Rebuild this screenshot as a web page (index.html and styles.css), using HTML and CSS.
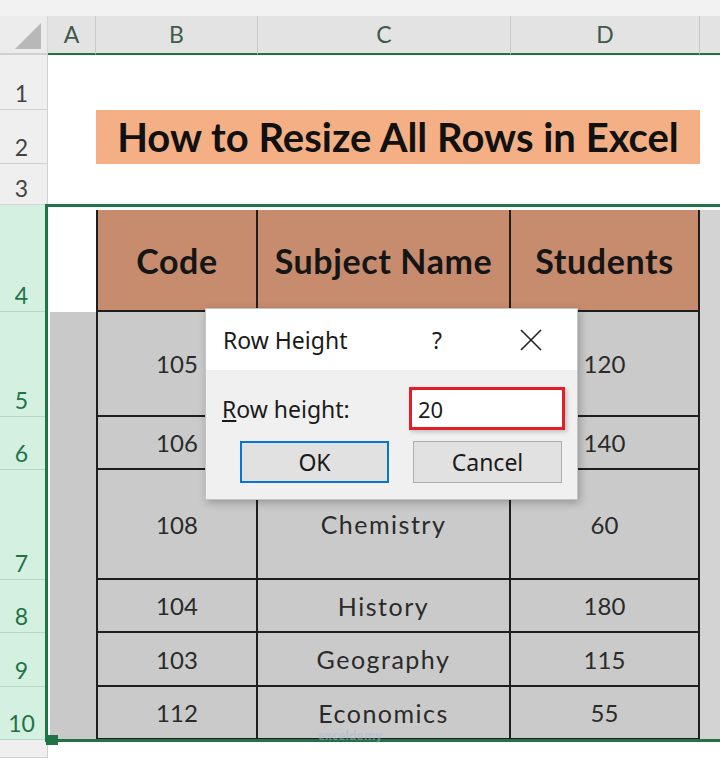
FILE: index.html
```html
<!DOCTYPE html>
<html>
<head>
<meta charset="utf-8">
<link rel="stylesheet" href="styles.css">
</head>
<body>
<div class="sheet">
  <div class="strip"></div>

  <div class="corner"><svg class="tri" width="26" height="26" viewBox="0 0 26 26"><polygon points="26,0 26,26 0,26" fill="#b8b8b8"/></svg></div>
  <div class="ch">A</div>
  <div class="ch">B</div>
  <div class="ch">C</div>
  <div class="ch">D</div>
  <div class="ch last"></div>

  <div class="rh">1</div><div class="c"></div><div class="c"></div><div class="c"></div><div class="c"></div><div class="c"></div>

  <div class="rh">2</div><div class="c"></div><div class="title">How to Resize All Rows in Excel</div><div class="c"></div>

  <div class="rh">3</div><div class="c"></div><div class="c"></div><div class="c"></div><div class="c"></div><div class="c"></div>

  <div class="rh sel">4</div>
  <div class="c active"></div>
  <div class="th first">Code</div>
  <div class="th">Subject Name</div>
  <div class="th">Students</div>
  <div class="c e top"></div>

  <div class="rh sel">5</div><div class="c a"></div><div class="td first">105</div><div class="td txt">Physics</div><div class="td">120</div><div class="c e"></div>
  <div class="rh sel">6</div><div class="c a"></div><div class="td first">106</div><div class="td txt">Biology</div><div class="td">140</div><div class="c e"></div>
  <div class="rh sel">7</div><div class="c a"></div><div class="td first">108</div><div class="td txt">Chemistry</div><div class="td">60</div><div class="c e"></div>
  <div class="rh sel">8</div><div class="c a"></div><div class="td first">104</div><div class="td txt">History</div><div class="td">180</div><div class="c e"></div>
  <div class="rh sel">9</div><div class="c a"></div><div class="td first">103</div><div class="td txt">Geography</div><div class="td">115</div><div class="c e"></div>
  <div class="rh sel">10</div><div class="c a"></div><div class="td first">112</div><div class="td txt">Economics</div><div class="td">55</div><div class="c e"></div>

  <div class="rh"></div><div class="c"></div><div class="c"></div><div class="c"></div><div class="c"></div><div class="c"></div>

  <div class="selection"><div class="handle"></div></div>
  <div class="watermark">exceldemy</div>

  <div class="dialog">
    <div class="dlg-title">
      <span class="dlg-name">Row Height</span>
      <span class="dlg-help">?</span>
      <svg class="dlg-close" width="24" height="24" viewBox="0 0 24 24"><path d="M2 2 L22 22 M22 2 L2 22" stroke="#222" stroke-width="1.6" fill="none"/></svg>
    </div>
    <div class="dlg-body">
      <div class="dlg-row">
        <span class="dlg-label"><u>R</u>ow height:</span>
        <div class="dlg-input"><span>20</span></div>
      </div>
      <div class="dlg-row btns">
        <div class="btn ok">OK</div>
        <div class="btn cancel">Cancel</div>
      </div>
    </div>
  </div>
</div>
</body>
</html>
```

FILE: styles.css
```css
html, body {
  margin: 0;
  padding: 0;
  background: #ffffff;
  overflow: hidden;
}

.sheet {
  position: relative;
  width: 720px;
  height: 758px;
  display: grid;
  grid-template-columns: 48px 48px 162px 253px 189px 20px;
  grid-template-rows: 16px 39px 55px 54px 41px 107px 105px 53px 110px 53px 54px 53px 18px;
  font-family: Lato, "Open Sans", sans-serif;
  overflow: hidden;
}

.strip {
  grid-column: 1 / 7;
  background: #f2f2f2;
}

.corner {
  background: #ececec;
  border-right: 1px solid #d6d6d6;
  border-bottom: 2px solid #d0d0d0;
  box-sizing: border-box;
  display: flex;
  align-items: flex-end;
  justify-content: flex-end;
  padding: 0 6px 4px 0;
}

.ch {
  background: #e3e3e3;
  border-right: 1px solid #c8c8c8;
  border-bottom: 2px solid #217346;
  box-sizing: border-box;
  display: flex;
  align-items: center;
  justify-content: center;
  font-size: 23px;
  color: #3d5a4a;
  padding-bottom: 2px;
}

.ch.last {
  border-right: none;
}

.rh {
  background: #efefef;
  border-right: 1px solid #d0d0d0;
  border-bottom: 1px solid #d2d2d2;
  box-sizing: border-box;
  display: flex;
  align-items: flex-end;
  justify-content: center;
  font-size: 23px;
  color: #444444;
  padding-bottom: 4px;
  padding-right: 4px;
  line-height: 1;
}

.rh.sel {
  background: #d4f0e1;
  color: #217346;
  border-bottom-color: #b4d8c4;
}

.c {
  background: #ffffff;
}

.c.a {
  background: #c9c9c9;
  margin-left: 2px;
}

.c.e {
  background: #d3d3d3;
}

.c.e.top {
  margin-top: 5px;
}

.title {
  grid-column: 3 / 6;
  background: #f4b084;
  display: flex;
  align-items: center;
  justify-content: center;
  font-weight: 700;
  font-size: 40px;
  color: #111111;
}

.th, .td {
  display: flex;
  align-items: center;
  justify-content: center;
  box-sizing: border-box;
  border-right: 2px solid #1e1e1e;
  border-bottom: 2px solid #1e1e1e;
}

.th.first, .td.first {
  border-left: 2px solid #1e1e1e;
}

.th {
  margin-top: 5px;
  background: #c68c6d;
  font-weight: 700;
  font-size: 34px;
  letter-spacing: 0.6px;
  color: #151515;
}

.td {
  background: #cacaca;
  font-size: 24px;
  color: #2a2a2a;
}

.td.txt {
  font-size: 25px;
  letter-spacing: 1.5px;
}

.selection {
  position: absolute;
  left: 45px;
  top: 204px;
  width: 700px;
  height: 538px;
  border: 3px solid #217346;
  border-right: none;
  box-sizing: border-box;
  pointer-events: none;
}

.handle {
  position: absolute;
  left: -2px;
  bottom: -6px;
  width: 12px;
  height: 10px;
  background: #217346;
}

.watermark {
  position: absolute;
  left: 318px;
  top: 729px;
  font-family: "Open Sans", sans-serif;
  font-size: 12px;
  line-height: 14px;
  font-weight: 700;
  color: #a9bdd6;
  opacity: 0.5;
}

.dialog {
  position: absolute;
  left: 205px;
  top: 308px;
  width: 373px;
  height: 192px;
  background: #f0f0f0;
  border: 1px solid #c4c4c4;
  box-sizing: border-box;
  box-shadow: 2px 3px 8px rgba(0, 0, 0, 0.25);
  font-family: "Noto Sans", "Open Sans", sans-serif;
  color: #1a1a1a;
  display: flex;
  flex-direction: column;
}

.dlg-title {
  height: 61px;
  background: #ffffff;
  display: flex;
  align-items: center;
  padding-left: 17px;
  box-sizing: border-box;
  position: relative;
}

.dlg-name {
  font-size: 23px;
}

.dlg-help {
  position: absolute;
  left: 226px;
  font-size: 23px;
}

.dlg-close {
  position: absolute;
  left: 313px;
  top: 19px;
}

.dlg-body {
  flex: 1;
  display: flex;
  flex-direction: column;
  padding: 17px 0 0 0;
  gap: 11px;
}

.dlg-row {
  display: flex;
  align-items: center;
  height: 43px;
}

.dlg-label {
  font-size: 23px;
  margin-left: 16px;
  width: 187px;
}

.dlg-input {
  width: 156px;
  height: 43px;
  border: 3px solid #e01f26;
  background: #ffffff;
  box-sizing: border-box;
  box-shadow: 2px 2px 4px rgba(0, 0, 0, 0.2);
  display: flex;
  align-items: center;
  padding-left: 6px;
  font-size: 22px;
}

.btns {
  height: 42px;
}

.btn {
  width: 149px;
  height: 42px;
  box-sizing: border-box;
  background: #e1e1e1;
  display: flex;
  align-items: center;
  justify-content: center;
  font-size: 23px;
}

.btn.ok {
  margin-left: 34px;
  border: 2px solid #0a74d0;
}

.btn.cancel {
  margin-left: 24px;
  border: 1px solid #adadad;
}
```
